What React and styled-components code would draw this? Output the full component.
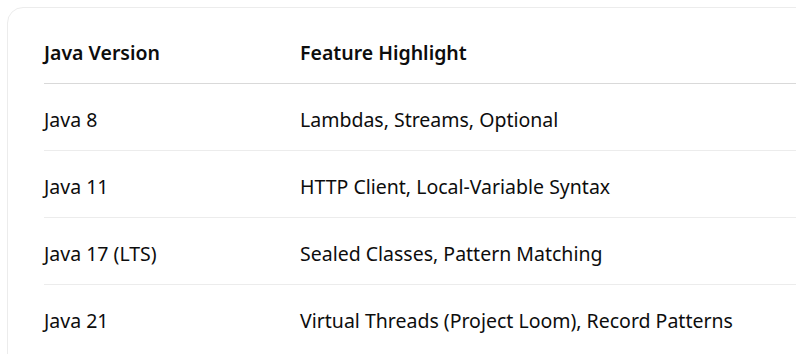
import React from "react";
import styled, { createGlobalStyle } from "styled-components";

const rows = [
  ["Java 8", "Lambdas, Streams, Optional"],
  ["Java 11", "HTTP Client, Local-Variable Syntax"],
  ["Java 17 (LTS)", "Sealed Classes, Pattern Matching"],
  ["Java 21", "Virtual Threads (Project Loom), Record Patterns"],
];

function App() {
  return (
    <>
      <GlobalStyle />
      <Card>
        <Table>
          <thead>
            <tr>
              <HeadCell>Java Version</HeadCell>
              <HeadCell>Feature Highlight</HeadCell>
            </tr>
          </thead>
          <tbody>
            {rows.map(([version, feature]) => (
              <Row key={version}>
                <Cell>{version}</Cell>
                <Cell>{feature}</Cell>
              </Row>
            ))}
          </tbody>
        </Table>
      </Card>
    </>
  );
}

const GlobalStyle = createGlobalStyle`
  * {
    box-sizing: border-box;
    margin: 0;
    padding: 0;
  }
  body {
    background: #ffffff;
    font-family: "Noto Sans", "Open Sans", Arial, sans-serif;
    color: #0d0d0d;
    overflow: hidden;
  }
`;

const Card = styled.div`
  margin: 7px 0 0 7px;
  width: 840px;
  height: 400px;
  padding: 8px 0 0 36px;
  border: 1px solid #ececec;
  border-radius: 16px;
  background: #fff;
`;

const Table = styled.table`
  width: 100%;
  border-collapse: collapse;
  font-size: 19.5px;
  line-height: 1.3;
`;

const HeadCell = styled.th`
  height: 67px;
  text-align: left;
  font-weight: 600;
  vertical-align: middle;
  border-bottom: 1px solid #d9d9d9;
  padding-top: 6px;

  &:first-child {
    width: 256px;
  }
`;

const Row = styled.tr`
  & + & td {
    border-top: 1px solid #ececec;
  }
`;

const Cell = styled.td`
  height: 67px;
  vertical-align: middle;
  padding-top: 6px;
`;

export default App;
